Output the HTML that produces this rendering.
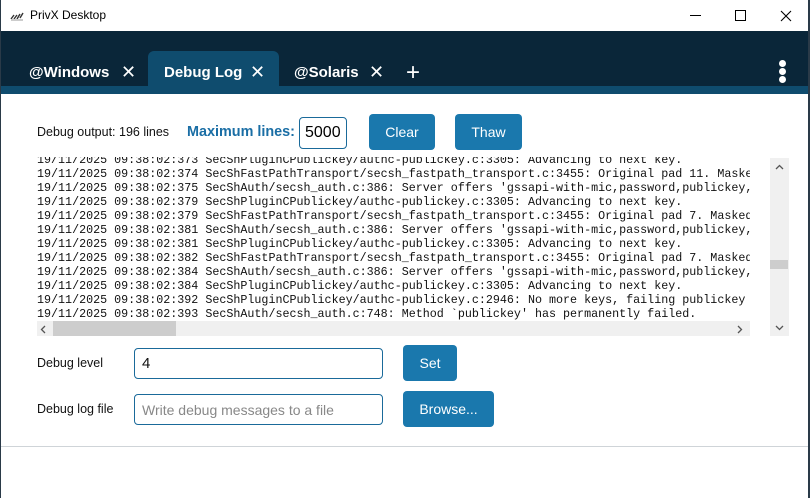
<!DOCTYPE html>
<html><head><style>
*{margin:0;padding:0;box-sizing:border-box}
body{width:810px;height:498px;overflow:hidden;background:#fff;font-family:"Liberation Sans",sans-serif;position:relative}
.abs{position:absolute}
.btn{position:absolute;background:#1a78ad;color:#fff;border-radius:4px;font-size:14px;display:flex;align-items:center;justify-content:center}
.inp{position:absolute;border:1px solid #1a6a9a;border-radius:4px;background:#fff;font-size:15px;padding-left:7px;display:flex;align-items:center}
.lbl{position:absolute;font-size:12.5px;color:#111}
.log{position:absolute;left:37px;top:157px;width:713px;height:164px;overflow:hidden;font-family:"Liberation Mono",monospace;font-size:11.7px;line-height:14px;color:#111;white-space:pre}
.tab{position:absolute;top:51px;height:43px;color:#fff;font-weight:bold;font-size:15px;display:flex;align-items:center}
</style></head><body>
<div class="abs" style="left:0;top:0;width:1px;height:498px;background:#2a3a48"></div>
<div class="abs" style="right:0;top:0;width:2px;height:498px;background:#2a3a48"></div>
<svg class="abs" style="left:10px;top:10px" width="14" height="12" viewBox="0 0 14 12"><path d="M1 9 L4 5 M4 9 L7 5 M7 9 L10 4 M10 8 L13 3" stroke="#333" stroke-width="1.4"/><path d="M1 10 L13 10" stroke="#ccc" stroke-width="2"/></svg>
<div class="abs" style="left:30px;top:8px;font-size:12px;color:#000">PrivX Desktop</div>
<div class="abs" style="left:690px;top:15px;width:11px;height:1px;background:#000"></div>
<div class="abs" style="left:735px;top:10px;width:11px;height:11px;border:1px solid #000"></div>
<svg class="abs" style="left:780px;top:10px" width="12" height="12"><path d="M1 1L11 11M11 1L1 11" stroke="#000" stroke-width="1.1"/></svg>
<div class="abs" style="left:1px;top:31px;width:807px;height:56px;background:#0a2639"></div>
<div class="abs" style="left:1px;top:86px;width:807px;height:8px;background:#0f4c6e"></div>
<div class="abs" style="left:148px;top:51px;width:131px;height:43px;background:#0f4c6e;border-radius:6px 6px 0 0"></div>
<div class="tab" style="left:29px">@Windows</div>
<div class="tab" style="left:121px;font-size:18px;font-weight:normal">✕</div>
<div class="tab" style="left:164px">Debug Log</div>
<div class="tab" style="left:250px;font-size:18px;font-weight:normal">✕</div>
<div class="tab" style="left:294px">@Solaris</div>
<div class="tab" style="left:369px;font-size:18px;font-weight:normal">✕</div>
<div class="tab" style="left:406px;font-size:24px;font-weight:normal">+</div>
<div class="abs" style="left:779px;top:60px;width:7px;height:7px;border-radius:50%;background:#fff"></div>
<div class="abs" style="left:779px;top:68px;width:7px;height:7px;border-radius:50%;background:#fff"></div>
<div class="abs" style="left:779px;top:76px;width:7px;height:7px;border-radius:50%;background:#fff"></div>

<div class="lbl" style="left:37px;top:125px">Debug output: 196 lines</div>
<div class="abs" style="left:187px;top:124px;font-size:14.4px;font-weight:bold;color:#1a6ea5">Maximum lines:</div>
<div class="inp" style="left:299px;top:117px;width:48px;height:32px;padding-left:5px;font-size:16px">5000</div>
<div class="btn" style="left:369px;top:114px;width:66px;height:36px">Clear</div>
<div class="btn" style="left:455px;top:114px;width:67px;height:36px">Thaw</div>

<div class="log"><div style="margin-top:-4px">19/11/2025 09:38:02:373 SecShPluginCPublickey/authc-publickey.c:3305: Advancing to next key.
19/11/2025 09:38:02:374 SecShFastPathTransport/secsh_fastpath_transport.c:3455: Original pad 11. Masked
19/11/2025 09:38:02:375 SecShAuth/secsh_auth.c:386: Server offers 'gssapi-with-mic,password,publickey,
19/11/2025 09:38:02:379 SecShPluginCPublickey/authc-publickey.c:3305: Advancing to next key.
19/11/2025 09:38:02:379 SecShFastPathTransport/secsh_fastpath_transport.c:3455: Original pad 7. Masked
19/11/2025 09:38:02:381 SecShAuth/secsh_auth.c:386: Server offers 'gssapi-with-mic,password,publickey,
19/11/2025 09:38:02:381 SecShPluginCPublickey/authc-publickey.c:3305: Advancing to next key.
19/11/2025 09:38:02:382 SecShFastPathTransport/secsh_fastpath_transport.c:3455: Original pad 7. Masked
19/11/2025 09:38:02:384 SecShAuth/secsh_auth.c:386: Server offers 'gssapi-with-mic,password,publickey,
19/11/2025 09:38:02:384 SecShPluginCPublickey/authc-publickey.c:3305: Advancing to next key.
19/11/2025 09:38:02:392 SecShPluginCPublickey/authc-publickey.c:2946: No more keys, failing publickey
19/11/2025 09:38:02:393 SecShAuth/secsh_auth.c:748: Method `publickey' has permanently failed.</div></div>
<div class="abs" style="left:37px;top:321px;width:713px;height:15px;background:#f0f0f0"></div>
<div class="abs" style="left:53px;top:321px;width:123px;height:15px;background:#cdcdcd"></div>
<svg class="abs" style="left:40px;top:325px" width="6" height="9"><path d="M5 1L1.5 4.5L5 8" stroke="#555" stroke-width="1.3" fill="none"/></svg>
<svg class="abs" style="left:737px;top:325px" width="6" height="9"><path d="M1 1L4.5 4.5L1 8" stroke="#555" stroke-width="1.3" fill="none"/></svg>
<div class="abs" style="left:770px;top:158px;width:19px;height:178px;background:#f0f0f0"></div>
<div class="abs" style="left:770px;top:260px;width:18px;height:9px;background:#cdcdcd"></div>
<svg class="abs" style="left:775px;top:164px" width="9" height="6"><path d="M1 5L4.5 1.5L8 5" stroke="#555" stroke-width="1.3" fill="none"/></svg>
<svg class="abs" style="left:775px;top:325px" width="9" height="6"><path d="M1 1L4.5 4.5L8 1" stroke="#555" stroke-width="1.3" fill="none"/></svg>

<div class="lbl" style="left:37px;top:356px">Debug level</div>
<div class="inp" style="left:134px;top:348px;width:249px;height:31px;color:#111">4</div>
<div class="btn" style="left:403px;top:345px;width:54px;height:36px">Set</div>
<div class="lbl" style="left:37px;top:402px">Debug log file</div>
<div class="inp" style="left:134px;top:394px;width:249px;height:31px;color:#888;font-size:14px">Write debug messages to a file</div>
<div class="btn" style="left:403px;top:391px;width:91px;height:36px">Browse...</div>
<div class="abs" style="left:1px;top:446px;width:807px;height:1px;background:#cfd4d8"></div>
</body></html>
